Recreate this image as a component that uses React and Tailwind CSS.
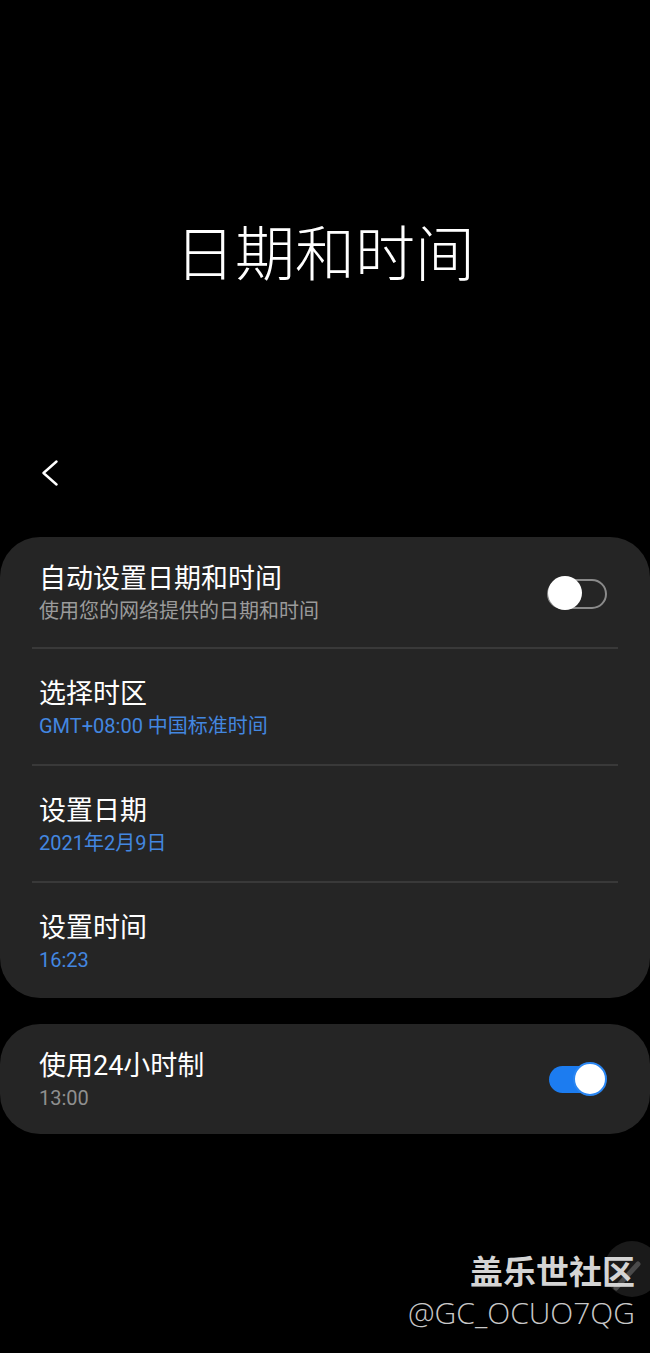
const cjk = { fontFamily: '"Noto Sans CJK SC", "Noto Sans", sans-serif' };
const mixed = { fontFamily: 'Roboto, "Noto Sans CJK SC", sans-serif' };

function Toggle({ on }) {
  if (on) {
    return (
      <div className="relative w-[58px] h-[34px] flex items-center -mt-[4px]">
        <div className="w-[56px] h-[27px] rounded-full bg-[#1c7cf0]" />
        <div className="absolute right-0 top-0 w-[34px] h-[34px] rounded-full bg-white border-[2px] border-[#2a86f2]" />
      </div>
    );
  }
  return (
    <div className="relative w-[60px] h-[34px] flex items-center">
      <div className="w-[60px] h-[30px] rounded-full border-[2px] border-[#8a8a8a]" />
      <div className="absolute left-[1px] top-[-1px] w-[34px] h-[34px] rounded-full bg-white" />
    </div>
  );
}

function Row({ title, sub, subColor, toggle, first }) {
  return (
    <div
      className={
        "flex items-center justify-between pl-[39px] pr-[43px] " +
        (first ? "pt-[25px] pb-[21px]" : "pt-[28px] pb-[23px]")
      }
    >
      <div className="flex flex-col">
        <div className="text-[27px] leading-[34px] text-white" style={mixed}>
          {title}
        </div>
        <div className={"text-[20px] leading-[30px] " + subColor} style={mixed}>
          {sub}
        </div>
      </div>
      {toggle}
    </div>
  );
}

function Divider() {
  return <div className="mx-[32px] h-[2px] bg-[#393939]" />;
}

export default function App() {
  return (
    <div className="min-h-[1353px] bg-black relative overflow-hidden">
      <div
        className="pt-[215px] text-center text-[60px] leading-[70px] text-white font-light"
        style={cjk}
      >
        日期和时间
      </div>

      <div className="mt-[165px] h-[46px] flex items-center pl-[41px]">
        <svg width="18" height="26" viewBox="0 0 18 26" fill="none">
          <path
            d="M15.5 1.5 L2.5 13 L15.5 24.5"
            stroke="white"
            strokeWidth="2.4"
            strokeLinecap="round"
            strokeLinejoin="round"
          />
        </svg>
      </div>

      <div className="mt-[41px] bg-[#252525] rounded-[40px]">
        <Row
          first
          title="自动设置日期和时间"
          sub="使用您的网络提供的日期和时间"
          subColor="text-[#9b9b9b]"
          toggle={<Toggle on={false} />}
        />
        <Divider />
        <Row title="选择时区" sub="GMT+08:00 中国标准时间" subColor="text-[#4387e0]" />
        <Divider />
        <Row title="设置日期" sub="2021年2月9日" subColor="text-[#4387e0]" />
        <Divider />
        <Row title="设置时间" sub="16:23" subColor="text-[#4387e0]" />
      </div>

      <div className="mt-[26px] bg-[#252525] rounded-[40px]">
        <Row
          first
          title="使用24小时制"
          sub="13:00"
          subColor="text-[#8f8f8f]"
          toggle={<Toggle on={true} />}
        />
      </div>

      <div className="relative mt-[120px] pr-[15px] text-right">
        <div className="absolute right-[-10px] top-[-13px] w-[56px] h-[56px] rounded-full bg-[#1a1a1a]">
          <svg width="56" height="56" viewBox="0 0 56 56">
            <path d="M34 23 L12 47" stroke="#4a4a4a" strokeWidth="5" strokeLinecap="round" />
          </svg>
        </div>
        <div
          className="relative text-[33px] leading-[33px] font-bold text-[#d4d4d4]"
          style={cjk}
        >
          盖乐世社区
        </div>
        <div
          className="relative mt-[9px] text-[30px] leading-[33px] font-light text-[#c8c8c8]"
          style={{ fontFamily: '"Open Sans", "Noto Sans", sans-serif' }}
        >
          @GC_OCUO7QG
        </div>
      </div>
    </div>
  );
}
